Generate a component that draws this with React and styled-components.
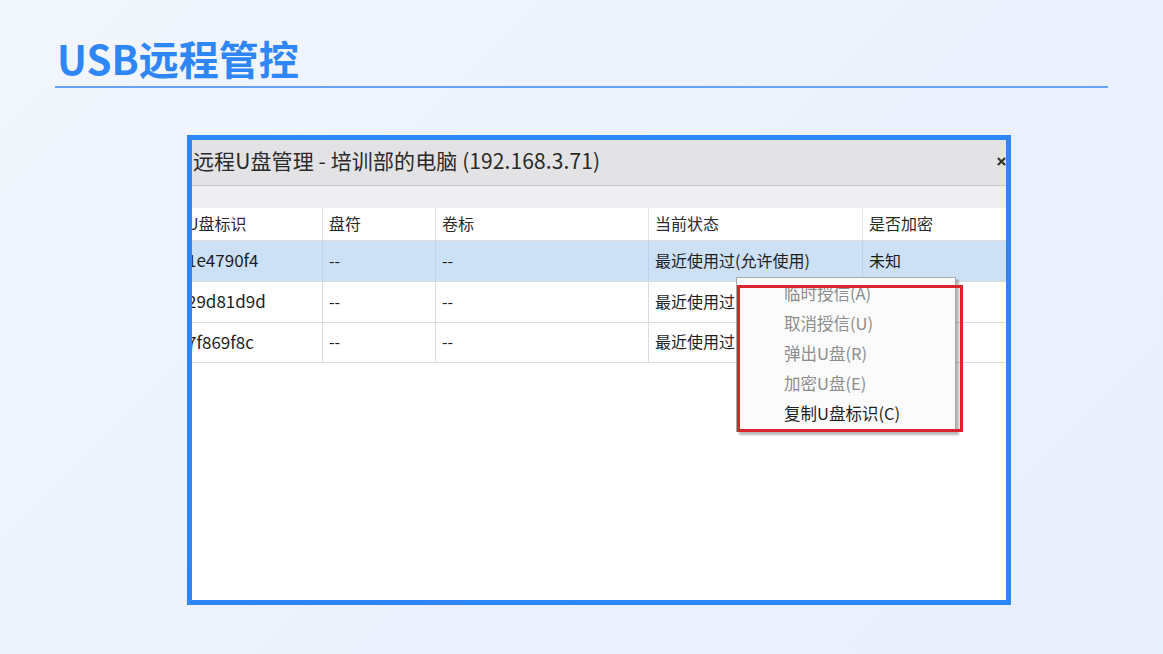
import React from "react";
import styled, { createGlobalStyle } from "styled-components";

const GlobalStyle = createGlobalStyle`
  html, body {
    margin: 0;
    padding: 0;
  }
  body {
    font-family: "Noto Sans CJK SC", "Noto Sans", sans-serif;
  }
`;

const columns = [
  { key: "id", label: "U盘标识", width: "142px" },
  { key: "drive", label: "盘符", width: "113px" },
  { key: "volume", label: "卷标", width: "213px" },
  { key: "state", label: "当前状态", width: "214px" },
  { key: "encrypted", label: "是否加密", width: "1fr" },
];

const rows = [
  { id: "1e4790f4", drive: "--", volume: "--", state: "最近使用过(允许使用)", encrypted: "未知", selected: true },
  { id: "29d81d9d", drive: "--", volume: "--", state: "最近使用过(允许使用)", encrypted: "未知" },
  { id: "7f869f8c", drive: "--", volume: "--", state: "最近使用过(允许使用)", encrypted: "未知" },
];

const menuItems = [
  { label: "临时授信(A)", disabled: true },
  { label: "取消授信(U)", disabled: true },
  { label: "弹出U盘(R)", disabled: true },
  { label: "加密U盘(E)", disabled: true },
  { label: "复制U盘标识(C)" },
];

const gridTemplate = columns.map((c) => c.width).join(" ");

const App = () => {
  return (
    <Page>
      <GlobalStyle />
      <Header>
        <Title>USB远程管控</Title>
      </Header>
      <Frame>
        <Window>
          <TitleBar>
            <WindowTitle>远程U盘管理 - 培训部的电脑 (192.168.3.71)</WindowTitle>
            <CloseIcon viewBox="0 0 10 10">
              <path d="M1 1 L9 9 M9 1 L1 9" />
            </CloseIcon>
          </TitleBar>
          <Toolbar />
          <Table>
            <HeaderRow>
              {columns.map((c) => (
                <HeaderCell key={c.key}>{c.label}</HeaderCell>
              ))}
            </HeaderRow>
            {rows.map((r) => (
              <Row key={r.id} $selected={r.selected}>
                {columns.map((c) => (
                  <Cell key={c.key} $selected={r.selected}>
                    {r[c.key]}
                  </Cell>
                ))}
              </Row>
            ))}
          </Table>
        </Window>
        <ContextMenu>
          {menuItems.map((m) => (
            <MenuItem key={m.label} $disabled={m.disabled}>
              {m.label}
            </MenuItem>
          ))}
        </ContextMenu>
        <Highlight />
      </Frame>
    </Page>
  );
};

export default App;

const Page = styled.div`
  width: 1163px;
  height: 654px;
  overflow: hidden;
  background: linear-gradient(135deg, #f2f6fd 0%, #ecf1fd 55%, #e8effd 100%);
  padding-top: 30px;
  box-sizing: border-box;
`;

const Header = styled.header`
  margin: 0 55px;
  padding-left: 2px;
  border-bottom: 2px solid #63a4f8;
`;

const Title = styled.h1`
  margin: 0;
  font-size: 40px;
  line-height: 56px;
  font-weight: 700;
  color: #2f86f6;
`;

const Frame = styled.section`
  position: relative;
  width: 824px;
  height: 470px;
  box-sizing: border-box;
  margin: 47px 0 0 187px;
  border: 5px solid #2e87f8;
  background: #ffffff;
  overflow: hidden;
`;

const Window = styled.div`
  width: 833px;
  margin-left: -11px;
  color: #1e1e1e;
`;

const TitleBar = styled.div`
  height: 46px;
  box-sizing: border-box;
  display: flex;
  align-items: center;
  justify-content: space-between;
  padding: 0 8px 5px 12px;
  background: #e3e3e6;
  border-bottom: 1px solid #c8c8cc;
`;

const WindowTitle = styled.span`
  font-size: 21px;
  letter-spacing: 0.1px;
  color: #2a2a2a;
`;

const CloseIcon = styled.svg`
  width: 9px;
  height: 9px;
  margin-top: 2px;
  stroke: #333;
  stroke-width: 2.4;
  fill: none;
`;

const Toolbar = styled.div`
  height: 22px;
  background: #efeff2;
`;

const Table = styled.div`
  display: flex;
  flex-direction: column;
`;

const HeaderRow = styled.div`
  display: grid;
  grid-template-columns: ${gridTemplate};
  height: 32px;
  background: #ffffff;
`;

const HeaderCell = styled.div`
  display: flex;
  align-items: center;
  padding: 0 0 2px 6px;
  font-size: 16px;
  color: #2a2a2a;
  border-right: 1px solid #e2e2e2;
`;

const Row = styled.div`
  display: grid;
  grid-template-columns: ${gridTemplate};
  height: 41px;
  box-sizing: border-box;
  border-top: 1px solid #dcdcdc;
  background: ${({ $selected }) => ($selected ? "#cce0f6" : "#ffffff")};
  &:last-child {
    border-bottom: 1px solid #dcdcdc;
  }
`;

const Cell = styled.div`
  display: flex;
  align-items: center;
  padding: 0 0 3px 6px;
  font-size: 16px;
  color: #1e1e1e;
  white-space: nowrap;
  border-right: 1px solid ${({ $selected }) => ($selected ? "#bcd2ea" : "#dcdcdc")};
  &:first-child {
    font-size: 17px;
  }
`;

const ContextMenu = styled.ul`
  position: absolute;
  left: 544px;
  top: 137px;
  width: 220px;
  margin: 0;
  padding: 0 0 3px;
  list-style: none;
  background: #fbfbfb;
  border: 1px solid #a9a9a9;
  box-sizing: border-box;
  box-shadow: 3px 3px 2px rgba(0, 0, 0, 0.28);
`;

const MenuItem = styled.li`
  height: 30px;
  display: flex;
  align-items: center;
  padding-left: 47px;
  font-size: 16.5px;
  color: ${({ $disabled }) => ($disabled ? "#8c8c8c" : "#1e1e1e")};
`;

const Highlight = styled.div`
  position: absolute;
  left: 545px;
  top: 145px;
  width: 226px;
  height: 147px;
  box-sizing: border-box;
  border: 3px solid #d9252c;
  pointer-events: none;
`;
